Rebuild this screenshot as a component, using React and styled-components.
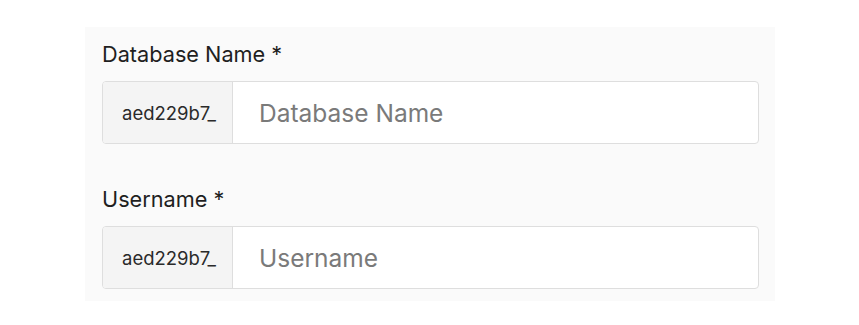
import React from "react";
import styled, { createGlobalStyle } from "styled-components";

const GlobalStyle = createGlobalStyle`
  body {
    margin: 0;
    background: #ffffff;
    font-family: Inter, "Noto Sans", sans-serif;
  }
`;

const Page = styled.div`
  padding: 27px 0 0 85px;
`;

const Panel = styled.div`
  width: 690px;
  height: 274px;
  box-sizing: border-box;
  background: #fafafa;
  padding: 14px 16px 0 17px;
  display: flex;
  flex-direction: column;
  gap: 42px;
`;

const Field = styled.div`
  display: flex;
  flex-direction: column;
  gap: 14px;
`;

const Label = styled.label`
  font-size: 21.7px;
  line-height: 26px;
  color: #1f1f1f;
`;

const InputGroup = styled.div`
  display: flex;
  height: 63px;
  box-sizing: border-box;
  border: 1px solid #dedede;
  border-radius: 4px;
  background: #ffffff;
  overflow: hidden;
`;

const Addon = styled.span`
  display: flex;
  align-items: center;
  width: 130px;
  box-sizing: border-box;
  padding-left: 19px;
  background: #f4f4f4;
  border-right: 1px solid #dedede;
  font-size: 18.5px;
  color: #2a2a2a;
`;

const Input = styled.input`
  flex: 1;
  border: none;
  outline: none;
  background: transparent;
  padding: 0 0 0 26px;
  font-family: Inter, "Noto Sans", sans-serif;
  font-size: 24.5px;
  color: #222;

  &::placeholder {
    color: #7a7a7a;
  }
`;

const fields = [
  { label: "Database Name *", placeholder: "Database Name" },
  { label: "Username *", placeholder: "Username" },
];

export default function App() {
  return (
    <>
      <GlobalStyle />
      <Page>
        <Panel>
          {fields.map((f) => (
            <Field key={f.label}>
              <Label>{f.label}</Label>
              <InputGroup>
                <Addon>aed229b7_</Addon>
                <Input placeholder={f.placeholder} />
              </InputGroup>
            </Field>
          ))}
        </Panel>
      </Page>
    </>
  );
}
